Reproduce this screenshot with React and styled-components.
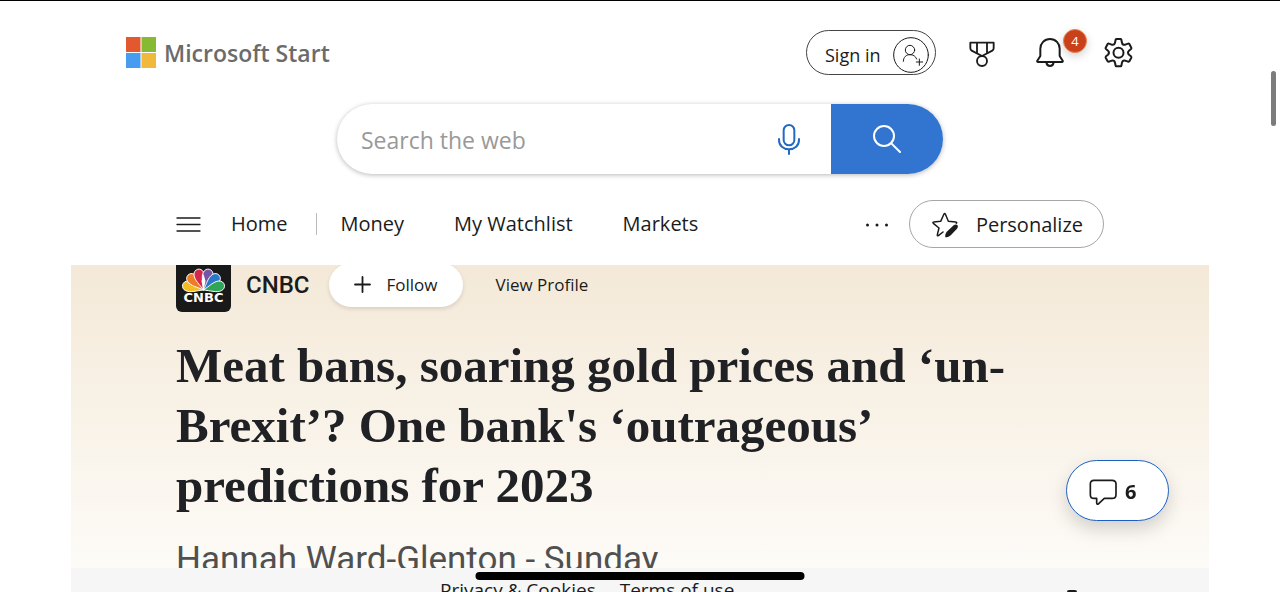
import React from 'react'
import styled, { createGlobalStyle, css } from 'styled-components'

const UI_FONT = '"Open Sans", "Noto Sans", sans-serif'
const BYLINE_FONT = 'Roboto, "Liberation Sans", sans-serif'
const INK = '#1b1b1b'
const BLUE = '#3275d0'

const GlobalStyle = createGlobalStyle`
  *, *::before, *::after {
    box-sizing: border-box;
  }

  body {
    margin: 0;
    background: #fff;
    color: ${INK};
    font-family: ${UI_FONT};
  }

  button, input {
    font-family: inherit;
    color: inherit;
  }
`

const Page = styled.div`
  display: flex;
  flex-direction: column;
  height: 100vh;
  overflow: hidden;
  border-top: 1px solid #000;
`

const Column = styled.div`
  width: 100%;
  max-width: 1138px;
  margin: 0 auto;
`

const Header = styled(Column)`
  padding-top: 29px;
`

const TopBar = styled.div`
  display: flex;
  justify-content: space-between;
  align-items: center;
  padding: 0 76px 0 55px;
`

const Brand = styled.a`
  display: flex;
  align-items: center;
  gap: 8px;
  color: #6b6b6b;
  font-size: 23px;
  font-weight: 600;
  line-height: 32px;
  text-decoration: none;
`

const Group = styled.div`
  display: flex;
  align-items: center;
  gap: ${p => p.$gap}px;
`

const bareButton = css`
  display: flex;
  align-items: center;
  padding: 0;
  border: 0;
  background: none;
  cursor: pointer;
`

const SignIn = styled.button`
  ${bareButton}
  justify-content: space-between;
  width: 130px;
  height: 45px;
  padding: 4px 6px 0 18px;
  border: 1px solid #444;
  border-radius: 23px;
  background: #fff;
  font-size: 18px;
`

const IconButton = styled.button`
  ${bareButton}
  position: relative;
  color: ${p => p.$color || INK};
`

const Badge = styled.span`
  position: absolute;
  top: -9px;
  left: 27px;
  width: 24px;
  height: 24px;
  border: 1px solid #e8834f;
  border-radius: 50%;
  background: #c9411b;
  box-shadow: 0 3px 8px rgba(0, 0, 0, 0.18);
  color: #fff;
  font-size: 13px;
  line-height: 22px;
  text-align: center;
`

const Search = styled.form`
  display: flex;
  align-items: center;
  width: 606px;
  max-width: 100%;
  height: 70px;
  margin: 29px auto 0;
  border-radius: 35px;
  background: #fff;
  box-shadow: 0 1px 5px rgba(0, 0, 0, 0.28);
  overflow: hidden;
`

const SearchInput = styled.input`
  flex: 1;
  min-width: 0;
  height: 100%;
  padding: 2px 0 0 24px;
  border: 0;
  outline: 0;
  background: none;
  font-size: 23px;

  &::placeholder {
    color: #999;
    opacity: 1;
  }
`

const SearchButton = styled.button`
  ${bareButton}
  justify-content: center;
  width: 112px;
  height: 100%;
  margin-left: 31px;
  background: ${BLUE};
  color: #fff;
`

const Nav = styled.nav`
  display: flex;
  align-items: center;
  justify-content: space-between;
  padding: 26px 105px 17px;
`

const NavLink = styled.a`
  color: inherit;
  font-size: 20px;
  line-height: 28px;
  text-decoration: none;
`

const Divider = styled.span`
  width: 1px;
  height: 22px;
  margin: 0 24px 0 28px;
  background: #bbb;
`

const Personalize = styled.button`
  ${bareButton}
  gap: 17px;
  height: 48px;
  padding: 1px 20px 0 22px;
  border: 1px solid #a6a6a6;
  border-radius: 24px;
  background: #fff;
  font-size: 20px;
`

const Article = styled(Column)`
  flex: 1;
  min-height: 0;
  padding: 0 105px;
  overflow: hidden;
  background: linear-gradient(#f4e9d8, #fdfbf7);
`

const Publisher = styled.div`
  display: flex;
  align-items: center;
  margin-top: -8px;
`

const PublisherName = styled.span`
  margin-left: 15px;
  font-family: ${BYLINE_FONT};
  font-size: 24px;
  font-weight: 500;
`

const Follow = styled.button`
  ${bareButton}
  justify-content: center;
  gap: 16px;
  width: 134px;
  height: 44px;
  margin: 0 33px 0 19px;
  border-radius: 22px;
  background: #fff;
  box-shadow: 0 2px 4px rgba(0, 0, 0, 0.12);
  font-size: 17px;
`

const ProfileLink = styled.a`
  color: inherit;
  font-size: 17px;
  line-height: 24px;
  text-decoration: none;
`

const Headline = styled.h1`
  margin: 24px 0 0;
  color: #202124;
  font-family: "Liberation Serif", serif;
  font-size: 49px;
  font-weight: 700;
  line-height: 60px;
`

const Byline = styled.p`
  margin: 24px 0 0;
  color: #505050;
  font-family: ${BYLINE_FONT};
  font-size: 35px;
  line-height: 40px;
  white-space: nowrap;
`

const Footer = styled(Column)`
  display: flex;
  justify-content: space-between;
  align-items: flex-start;
  height: 24px;
  padding: 8px 132px 0 369px;
  overflow: hidden;
  background: #f6f6f6;
`

const FooterLink = styled.a`
  color: inherit;
  font-size: 19px;
  line-height: 28px;
  text-decoration: none;
`

const FooterButton = styled.button`
  ${bareButton}
  height: 10px;
  margin-top: 14px;
`

const Comments = styled.button`
  ${bareButton}
  position: fixed;
  right: 111px;
  bottom: 71px;
  gap: 8px;
  width: 103px;
  height: 61px;
  padding: 2px 0 0 22px;
  border: 1px solid #1b5fc4;
  border-radius: 31px;
  background: #fff;
  box-shadow: 0 8px 18px rgba(0, 0, 0, 0.16);
  font-size: 20px;
  font-weight: 700;
`

const HomeIndicator = styled.div`
  position: fixed;
  bottom: 12px;
  left: 50%;
  width: 329px;
  height: 8px;
  border-radius: 4px;
  background: #000;
  transform: translateX(-50%);
`

const ScrollThumb = styled.div`
  position: fixed;
  top: 71px;
  right: 4px;
  width: 5px;
  height: 55px;
  border-radius: 3px;
  background: #7c7c7c;
`

const Stroke = styled.svg.attrs({ fill: 'none', stroke: 'currentColor', 'aria-hidden': true })`
  display: block;
  flex: none;
  stroke-linecap: round;
  stroke-linejoin: round;
`

const WindowsLogo = () => (
  <svg width="30" height="31" viewBox="0 0 30 31" aria-hidden="true">
    <path fill="#e2582f" d="M0 0h14.500v15H0z" />
    <path fill="#86b934" d="M15.500 0H30v15H15.500z" />
    <path fill="#469df0" d="M0 16h14.500v15H0z" />
    <path fill="#f0b93c" d="M15.500 16H30v15H15.500z" />
  </svg>
)

const AvatarIcon = () => (
  <Stroke width="36" height="36" viewBox="0 0 108 108" strokeWidth="3">
    <circle cx="54" cy="54" r="52" />
    <circle cx="51" cy="39" r="14" />
    <path d="M31 73c0-13 9-20 20-20 10 0 17 5 20 13M79 66v19M70 75h19" />
  </Stroke>
)

const MedalIcon = () => (
  <Stroke width="28" height="30" viewBox="0 0 84 90" strokeWidth="5.500">
    <path d="M7 14h70v17c0 3-1 5-4 7L42 54 11 38c-3-2-4-4-4-7zM27 14v31M57 14v31" />
    <circle cx="42" cy="69" r="15" />
  </Stroke>
)

const BellIcon = () => (
  <Stroke width="28" height="30" viewBox="0 0 84 90" strokeWidth="6">
    <path d="M42 3c-17 0-29 13-29 29v22L4 68c-1 2 0 4 2 4h72c2 0 3-2 2-4l-9-14V32C71 16 59 3 42 3z" />
    <path d="M31 73c1 7 5 11 11 11s10-4 11-11" />
  </Stroke>
)

const GearIcon = () => (
  <Stroke width="29" height="30" viewBox="0 0 87 90" strokeWidth="6">
    <path d="M35 5c0-1 1-2 2-2h13c1 0 2 1 2 2l2 9c1 5 5 7 10 6l8-3c2-1 3 0 4 1l6 11c1 2 0 3-1 4l-6 5c-4 4-4 8 0 12l6 5c1 1 2 2 1 4l-6 11c-1 1-2 2-4 1l-8-3c-5-1-9 1-10 6l-2 9c0 1-1 2-2 2H37c-1 0-2-1-2-2l-2-9c-1-5-5-7-10-6l-8 3c-2 1-3 0-4-1L5 59c-1-2 0-3 1-4l6-5c4-4 4-8 0-12l-6-5c-1-1-2-2-1-4l6-11c1-1 2-2 4-1l8 3c5 1 9-1 10-6z" />
    <circle cx="43.500" cy="44" r="15" />
  </Stroke>
)

const MicIcon = () => (
  <Stroke width="22" height="31" viewBox="0 0 66 93" strokeWidth="6">
    <rect x="17" y="3" width="32" height="61" rx="16" />
    <path d="M3 45v3c0 17 13 28 30 28s30-11 30-28v-3M33 76v14" />
  </Stroke>
)

const SearchIcon = () => (
  <Stroke width="28" height="28" viewBox="0 0 84 84" strokeWidth="6">
    <circle cx="33" cy="33" r="30" />
    <path d="M55 55l26 26" />
  </Stroke>
)

const MenuIcon = () => (
  <Stroke width="25" height="15" viewBox="0 0 25 15" strokeWidth="1.300">
    <path d="M1 1h23M1 7.500h23M1 14h23" />
  </Stroke>
)

const MoreIcon = () => (
  <svg width="24" height="6" viewBox="0 0 24 6" fill="currentColor" aria-hidden="true">
    <circle cx="2.500" cy="4" r="1.500" />
    <circle cx="12" cy="4" r="1.500" />
    <circle cx="21.500" cy="4" r="1.500" />
  </svg>
)

const StarPenIcon = () => (
  <Stroke width="27" height="26" viewBox="0 0 81 78" strokeWidth="4.500">
    <path d="M33 60l-14 11c-2 1-4 0-3-3l5-20L4 34c-2-2-1-4 1-4l21-2L36 6c1-2 3-2 4 0l9 22 22 2c3 0 4 2 2 4" />
    <path fill="currentColor" stroke="none" d="M40 76c-1-8 1-13 6-18l19-18c9-7 17 2 10 10L57 69c-5 5-10 7-17 7z" />
  </Stroke>
)

const PlusIcon = () => (
  <Stroke width="17" height="17" viewBox="0 0 17 17" strokeWidth="1.800">
    <path d="M8.500 1v15M1 8.500h15" />
  </Stroke>
)

const CommentIcon = () => (
  <Stroke width="28" height="26" viewBox="0 0 84 78" strokeWidth="5">
    <path d="M15 4h54c7 0 12 4 12 11v32c0 7-5 11-12 11H46L29 74c-3 3-6 2-6-2V58h-8C8 58 4 54 4 47V15C4 8 8 4 15 4z" />
  </Stroke>
)

const FEATHERS = [
  ['#f5bb22', -76],
  ['#ee7b25', -46],
  ['#d5264c', -16],
  ['#7754a3', 16],
  ['#2b78c9', 46],
  ['#2fa557', 76]
]

const CnbcLogo = () => (
  <svg width="55" height="55" viewBox="0 0 55 55" role="img" aria-label="CNBC">
    <rect width="55" height="55" rx="6" fill="#191919" />
    {FEATHERS.map(([fill, angle]) => (
      <path
        key={fill}
        d="M0 0C-2-6-6-12-5-17-4-23 4-23 5-17 6-12 2-6 0 0z"
        fill={fill}
        stroke="#fff"
        strokeWidth="0.900"
        transform={`translate(27.500 33) rotate(${angle})`}
      />
    ))}
    <path d="M27.500 34l-2-10 2-7 2 7z" fill="#fff" />
    <text x="27.500" y="45" fill="#fff" textAnchor="middle" fontFamily="DejaVu Sans, sans-serif" fontSize="13" fontWeight="700">
      CNBC
    </text>
  </svg>
)

const FooterIcon = () => (
  <svg width="10" height="10" viewBox="0 0 10 10" aria-hidden="true">
    <rect width="10" height="10" rx="2" fill={INK} />
  </svg>
)

const NAV_ITEMS = ['Money', 'My Watchlist', 'Markets']

export default function App() {
  return (
    <>
      <GlobalStyle />
      <Page>
        <Header as="header">
          <TopBar>
            <Brand href="#start">
              <WindowsLogo />
              Microsoft Start
            </Brand>
            <Group $gap={32}>
              <SignIn type="button">
                Sign in
                <AvatarIcon />
              </SignIn>
              <Group $gap={40}>
                <IconButton type="button" aria-label="Rewards">
                  <MedalIcon />
                </IconButton>
                <IconButton type="button" aria-label="Notifications">
                  <BellIcon />
                  <Badge>4</Badge>
                </IconButton>
                <IconButton type="button" aria-label="Settings">
                  <GearIcon />
                </IconButton>
              </Group>
            </Group>
          </TopBar>
          <Search role="search" onSubmit={e => e.preventDefault()}>
            <SearchInput type="text" placeholder="Search the web" aria-label="Search the web" />
            <IconButton type="button" aria-label="Voice search" $color="#2468c4">
              <MicIcon />
            </IconButton>
            <SearchButton type="submit" aria-label="Search">
              <SearchIcon />
            </SearchButton>
          </Search>
          <Nav>
            <Group $gap={0}>
              <Group $gap={30}>
                <IconButton type="button" aria-label="Menu">
                  <MenuIcon />
                </IconButton>
                <NavLink href="#home">Home</NavLink>
              </Group>
              <Divider />
              <Group $gap={50}>
                {NAV_ITEMS.map(item => (
                  <NavLink key={item} href="#nav">{item}</NavLink>
                ))}
              </Group>
            </Group>
            <Group $gap={20}>
              <IconButton type="button" aria-label="More">
                <MoreIcon />
              </IconButton>
              <Personalize type="button">
                <StarPenIcon />
                Personalize
              </Personalize>
            </Group>
          </Nav>
        </Header>
        <Article as="main">
          <Publisher>
            <CnbcLogo />
            <PublisherName>CNBC</PublisherName>
            <Follow type="button">
              <PlusIcon />
              Follow
            </Follow>
            <ProfileLink href="#profile">View Profile</ProfileLink>
          </Publisher>
          <Headline>
            Meat bans, soaring gold prices and ‘un-<br />
            Brexit’? One bank's ‘outrageous’<br />
            predictions for 2023
          </Headline>
          <Byline>Hannah Ward-Glenton - Sunday</Byline>
        </Article>
        <Footer as="footer">
          <Group $gap={24}>
            <FooterLink href="#privacy">Privacy &amp; Cookies</FooterLink>
            <FooterLink href="#terms">Terms of use</FooterLink>
          </Group>
          <FooterButton type="button" aria-label="Feedback">
            <FooterIcon />
          </FooterButton>
        </Footer>
      </Page>
      <Comments type="button" aria-label="6 comments">
        <CommentIcon />
        6
      </Comments>
      <HomeIndicator />
      <ScrollThumb />
    </>
  )
}
